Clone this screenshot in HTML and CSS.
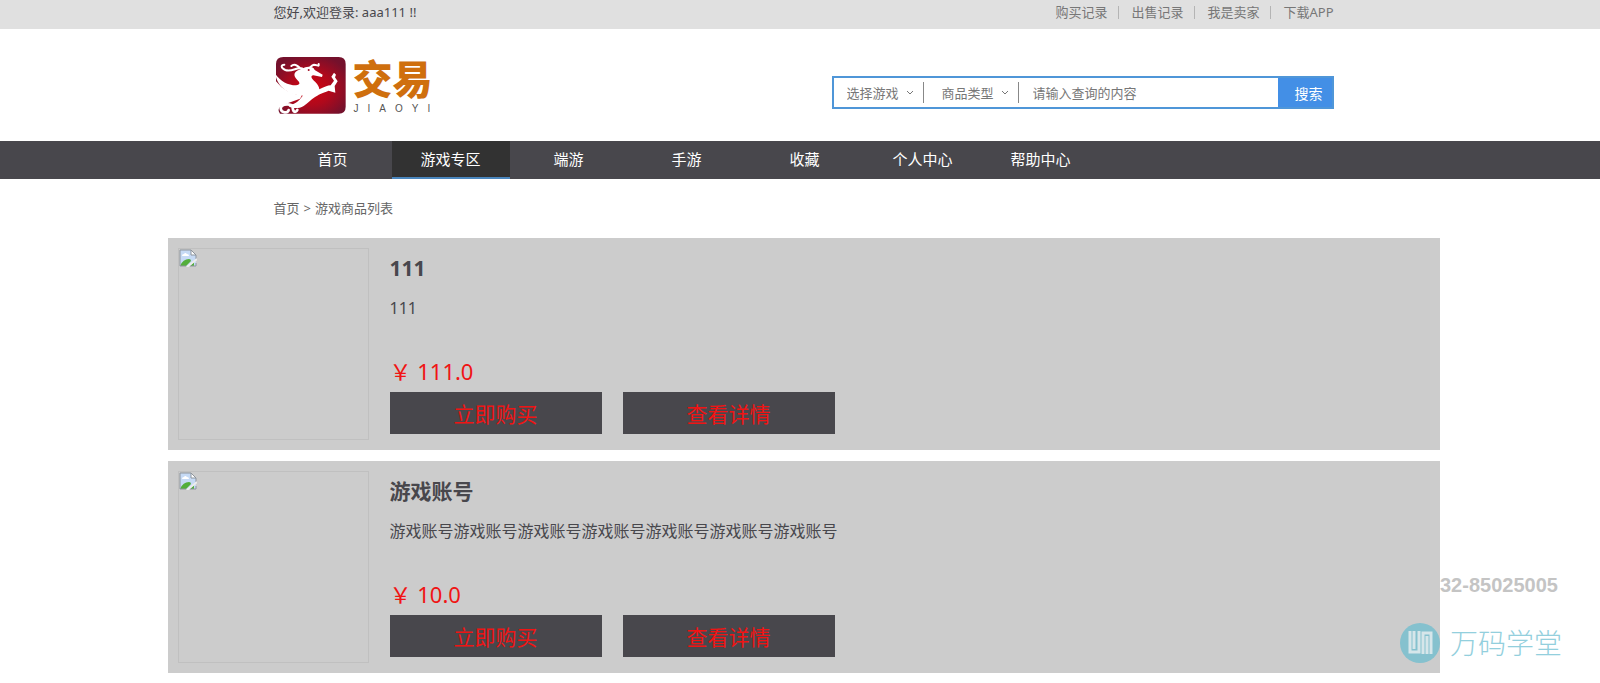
FILE: index.html
```
<!DOCTYPE html>
<html lang="zh-CN">
  <head>
    <meta charset="UTF-8" />
    <meta name="viewport" content="width=device-width, initial-scale=1.0" />
    <title>游戏商品列表</title>
    <link rel="stylesheet" href="styles.css">
  </head>
  <body>
    <!-- Top bar -->
    <div class="topbar">
      <div class="container topbar-inner">
        <p>您好,欢迎登录: aaa111 !!</p>
        <div class="top-links">
          <a href="#">购买记录</a>
          <a href="#">出售记录</a>
          <a href="#">我是卖家</a>
          <a href="#">下载APP</a>
        </div>
      </div>
    </div>

    <!-- Logo and search -->
    <header class="header">
      <div class="container header-inner">
        <a class="logo" href="#">
          <svg class="logo-mark" viewBox="9 15 216 174" width="72" height="58" aria-hidden="true">
            <defs>
              <radialGradient id="logoRed" cx="0.5" cy="0.55" r="0.6">
                <stop offset="0" stop-color="#d4040f" />
                <stop offset="0.5" stop-color="#b0091c" />
                <stop offset="1" stop-color="#74112c" />
              </radialGradient>
            </defs>
            <path fill="url(#logoRed)" d="M34 15H200Q221 15 221 36V164Q221 185 200 185H24Q12 172 30 160L84 140L90 130Q40 125 12 88V36Q12 15 34 15Z" />
            <path fill="#fff" d="M10 66C25 88 48 100 72 100C86 98 84 92 76 84C62 70 66 60 80 54L100 46C112 42 126 46 128 54L152 68L150 75L124 70C114 72 118 80 130 90C138 98 142 106 142 112C155 106 168 100 176 100L186 86L178 74L186 62L192 68L189 76L197 88L188 102L190 122L170 116C150 124 138 128 128 136C116 144 108 154 95 162C78 172 64 168 50 164C60 156 74 154 84 142C90 134 94 132 90 130C53 130 16 107 10 66Z" />
            <circle cx="110" cy="54" r="3" fill="#a00b20" />
            <path fill="none" stroke="#fff" stroke-width="6" stroke-linecap="round" d="M96 54C82 38 62 62 40 54C26 48 26 38 37 38M58 42C66 34 76 40 84 48M108 48C116 50 116 40 126 38C136 38 142 46 140 36" />
            <path fill="none" stroke="#fff" stroke-width="8" stroke-linecap="round" d="M60 160C44 154 26 158 26 170C28 184 48 184 50 174M62 164C62 180 70 184 76 174" />
          </svg>
          <span class="logo-text">
            <strong>交易</strong>
            <small>JIAOYI</small>
          </span>
        </a>

        <form class="search" action="#">
          <div class="search-select">
            <select aria-label="选择游戏">
              <option>选择游戏</option>
            </select>
            <svg viewBox="0 0 8 6" width="8" height="6" aria-hidden="true"><path d="M1 1L4 4L7 1" /></svg>
          </div>
          <div class="search-select">
            <select aria-label="商品类型">
              <option>商品类型</option>
            </select>
            <svg viewBox="0 0 8 6" width="8" height="6" aria-hidden="true"><path d="M1 1L4 4L7 1" /></svg>
          </div>
          <input type="text" aria-label="查询内容" placeholder="请输入查询的内容" />
          <button type="submit">搜索</button>
        </form>
      </div>
    </header>

    <!-- Main navigation -->
    <nav class="nav">
      <div class="container nav-inner">
        <a href="#">首页</a>
        <a class="active" href="#">游戏专区</a>
        <a href="#">端游</a>
        <a href="#">手游</a>
        <a href="#">收藏</a>
        <a href="#">个人中心</a>
        <a href="#">帮助中心</a>
      </div>
    </nav>

    <div class="crumbs">
      <div class="container crumbs-inner">
        <a href="#">首页</a>
        <span>&gt;</span>
        <a href="#">游戏商品列表</a>
      </div>
    </div>

    <!-- Goods list -->
    <main class="goods">
      <div class="goods-item">
        <div class="goods-pic">
          <svg viewBox="0 0 18 18" width="18" height="18" role="img" aria-label="商品图片">
            <path fill="#c6daf5" d="M1 1H12L17 6V17H1Z" />
            <path fill="#fff" d="M3 7Q3 5 5 5Q6 3 8 5Q10 5 10 7ZM12 1V6H17Z" />
            <path fill="#53ae3b" d="M1 17Q4 10 10 10Q12 10 12 12L7 17ZM11 17L15 13V17Z" />
            <path fill="none" stroke="#8d949c" d="M17 10V6L12 1H1V17H7M12 1V6H17M11 17H17V14" />
            <path stroke="#ececec" stroke-width="2" d="M8 18L18 10" />
          </svg>
        </div>
        <div class="goods-info">
          <h2>111</h2>
          <p class="desc">111</p>
          <p class="price">￥ 111.0</p>
          <div class="actions">
            <button type="button">立即购买</button>
            <button type="button">查看详情</button>
          </div>
        </div>
      </div>

      <div class="goods-item">
        <div class="goods-pic">
          <svg viewBox="0 0 18 18" width="18" height="18" role="img" aria-label="商品图片">
            <path fill="#c6daf5" d="M1 1H12L17 6V17H1Z" />
            <path fill="#fff" d="M3 7Q3 5 5 5Q6 3 8 5Q10 5 10 7ZM12 1V6H17Z" />
            <path fill="#53ae3b" d="M1 17Q4 10 10 10Q12 10 12 12L7 17ZM11 17L15 13V17Z" />
            <path fill="none" stroke="#8d949c" d="M17 10V6L12 1H1V17H7M12 1V6H17M11 17H17V14" />
            <path stroke="#ececec" stroke-width="2" d="M8 18L18 10" />
          </svg>
        </div>
        <div class="goods-info">
          <h2>游戏账号</h2>
          <p class="desc">游戏账号游戏账号游戏账号游戏账号游戏账号游戏账号游戏账号</p>
          <p class="price">￥ 10.0</p>
          <div class="actions">
            <button type="button">立即购买</button>
            <button type="button">查看详情</button>
          </div>
        </div>
      </div>
    </main>

    <!-- Floating contact mark -->
    <aside class="contact">
      <p class="phone">32-85025005</p>
      <div class="brand">
        <svg viewBox="0 0 40 40" width="40" height="40" aria-hidden="true">
          <circle cx="20" cy="20" r="20" fill="#85c1ce" />
          <path fill="none" stroke="#d6e6ea" stroke-width="3" d="M10 8V29H19V8M14 8V26M23 31V10H31V31M27 13V31" />
        </svg>
        <span>万码学堂</span>
      </div>
    </aside>
  </body>
</html>
```
FILE: styles.css
```
/* Basic page styling */
* {
  box-sizing: border-box;
}

body {
  margin: 0;
  position: relative;
  background-color: #fff;
  color: #48474c;
  font-family: "Noto Sans", "Noto Sans CJK SC", sans-serif;
  font-size: 13px;
}

h2,
p {
  margin: 0;
}

a {
  color: inherit;
  text-decoration: none;
}

button,
input,
select {
  font-family: inherit;
  border: none;
  margin: 0;
  padding: 0;
}

.topbar,
.header,
.nav,
.crumbs,
.goods {
  padding-left: 7px;
}

.container {
  width: 90%;
  max-width: 1060px;
  margin: 0 auto;
}

/* Top bar */
.topbar {
  background-color: #e0e0e0;
}

.topbar-inner {
  display: flex;
  justify-content: space-between;
  line-height: 25px;
  padding-bottom: 4px;
}

.top-links {
  display: flex;
  align-items: center;
  color: #777;
}

.top-links a {
  line-height: 13px;
}

.top-links a + a {
  margin-left: 11px;
  padding-left: 12px;
  border-left: 1px solid #b4b4b4;
}

/* Header */
.header-inner {
  display: flex;
  justify-content: space-between;
  align-items: flex-start;
  padding: 28px 0 26px;
}

.logo {
  display: flex;
  gap: 6px;
  padding-left: 1px;
}

.logo-text {
  display: flex;
  flex-direction: column;
  gap: 6px;
}

.logo-text strong {
  color: #cf6f0e;
  font-family: "Noto Sans CJK SC", sans-serif;
  font-size: 40px;
  font-weight: 900;
  line-height: 40px;
}

.logo-text small {
  padding-left: 1px;
  color: #555;
  font-family: "Liberation Sans", sans-serif;
  font-size: 10px;
  line-height: 12px;
  letter-spacing: 9px;
}

/* Search box */
.search {
  display: flex;
  align-items: center;
  width: 502px;
  height: 33px;
  margin-top: 19px;
  border: 2px solid #4f96d8;
}

.search-select {
  display: flex;
  align-items: center;
  gap: 6px;
  height: 21px;
  padding: 0 9px 0 13px;
  border-right: 1px solid #888;
}

.search-select + .search-select {
  padding-left: 18px;
}

.search-select select {
  appearance: none;
  background: none;
  color: #777;
  font-size: 13px;
}

.search-select path {
  fill: none;
  stroke: #777;
}

.search input {
  flex: 1;
  min-width: 0;
  padding-left: 14px;
  font-size: 13px;
}

.search input::placeholder {
  color: #777;
}

.search button {
  align-self: stretch;
  width: 54px;
  padding-left: 8px;
  background-color: #438fe6;
  color: #fff;
  font-size: 14px;
}

/* Navigation */
.nav {
  background-color: #48474c;
}

.nav-inner {
  display: flex;
}

.nav a {
  width: 118px;
  color: #fff;
  font-size: 15px;
  line-height: 36px;
  text-align: center;
  border-bottom: 2px solid transparent;
}

.nav a.active {
  background-color: #323232;
  border-color: #4a86bd;
}

.crumbs {
  color: #666;
  line-height: 19px;
  padding-top: 20px;
  padding-bottom: 20px;
}

.crumbs-inner {
  display: flex;
  gap: 4px;
}

/* Goods list */
.goods {
  display: flex;
  flex-direction: column;
  align-items: center;
  gap: 11px;
  padding-bottom: 10px;
}

.goods-item {
  display: flex;
  gap: 21px;
  width: 90%;
  max-width: 1272px;
  padding: 10px;
  background-color: #ccc;
}

.goods-pic {
  width: 191px;
  height: 192px;
  border: 1px solid #c0c0c0;
}

.goods-info h2 {
  font-size: 21px;
  line-height: 40px;
}

.desc {
  min-height: 62px;
  font-size: 16px;
  line-height: 40px;
}

.price {
  color: #f01414;
  font-size: 22px;
  line-height: 42px;
}

.actions {
  display: flex;
  gap: 21px;
}

.actions button {
  width: 212px;
  height: 42px;
  background-color: #48474c;
  color: #f01414;
  font-size: 21px;
}

/* Contact mark over the bottom right corner */
.contact {
  position: absolute;
  right: 38px;
  bottom: 20px;
}

.phone {
  padding-left: 40px;
  color: #c4c4c4;
  font-family: "Liberation Sans", sans-serif;
  font-size: 20px;
  font-weight: bold;
  line-height: 24px;
}

.brand {
  display: flex;
  align-items: center;
  gap: 10px;
  margin-top: 26px;
  color: #93cfdd;
  font-size: 28px;
  font-weight: 300;
  line-height: 40px;
}
```
